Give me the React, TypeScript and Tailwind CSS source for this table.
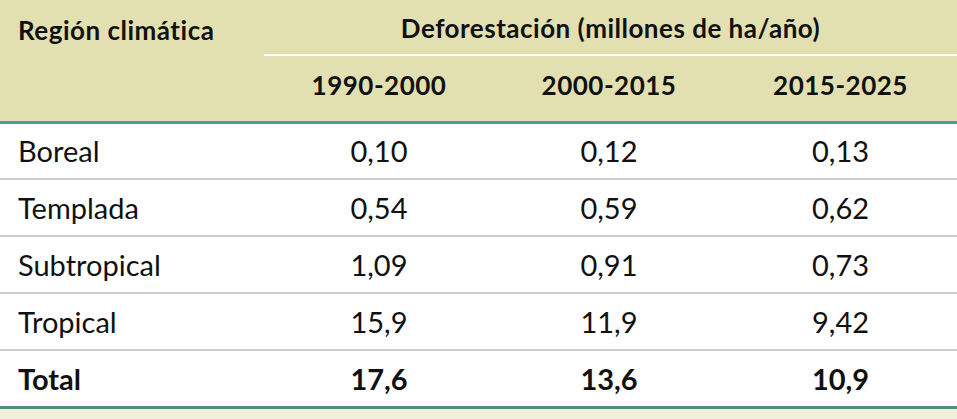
const rows = [
  { region: "Boreal", a: "0,10", b: "0,12", c: "0,13" },
  { region: "Templada", a: "0,54", b: "0,59", c: "0,62" },
  { region: "Subtropical", a: "1,09", b: "0,91", c: "0,73" },
  { region: "Tropical", a: "15,9", b: "11,9", c: "9,42" },
];

export default function App() {
  return (
    <div className="w-[957px] h-[419px] bg-[#f0efdb] text-[#111] font-['Lato','Liberation_Sans',sans-serif]">
      <table className="w-[957px] border-collapse table-fixed">
        <colgroup>
          <col className="w-[264px]" />
          <col className="w-[230px]" />
          <col className="w-[230px]" />
          <col className="w-[233px]" />
        </colgroup>
        <thead className="bg-[#e2e0b0] text-[26px] font-bold tracking-[0.5px]">
          <tr className="h-[55px]">
            <th rowSpan={2} className="align-top text-left pl-[18px] pt-[11px] border-b-[3px] border-[#5797a4]">
              Región climática
            </th>
            <th colSpan={3} className="text-center pt-[2px] border-b-2 border-white">
              Deforestación (millones de ha/año)
            </th>
          </tr>
          <tr className="h-[67px]">
            <th className="text-center pb-[6px] border-b-[3px] border-[#5797a4]">1990-2000</th>
            <th className="text-center pb-[6px] border-b-[3px] border-[#5797a4]">2000-2015</th>
            <th className="text-center pb-[6px] border-b-[3px] border-[#5797a4]">2015-2025</th>
          </tr>
        </thead>
        <tbody className="bg-white text-[29px]">
          {rows.map((r) => (
            <tr key={r.region} className="h-[57px] border-b-2 border-[#cccccc]">
              <td className="pl-[18px]">{r.region}</td>
              <td className="text-center">{r.a}</td>
              <td className="text-center">{r.b}</td>
              <td className="text-center">{r.c}</td>
            </tr>
          ))}
          <tr className="h-[57px] font-bold border-b-[3px] border-[#4d8e7c]">
            <td className="pl-[18px]">Total</td>
            <td className="text-center">17,6</td>
            <td className="text-center">13,6</td>
            <td className="text-center">10,9</td>
          </tr>
        </tbody>
      </table>
    </div>
  );
}
